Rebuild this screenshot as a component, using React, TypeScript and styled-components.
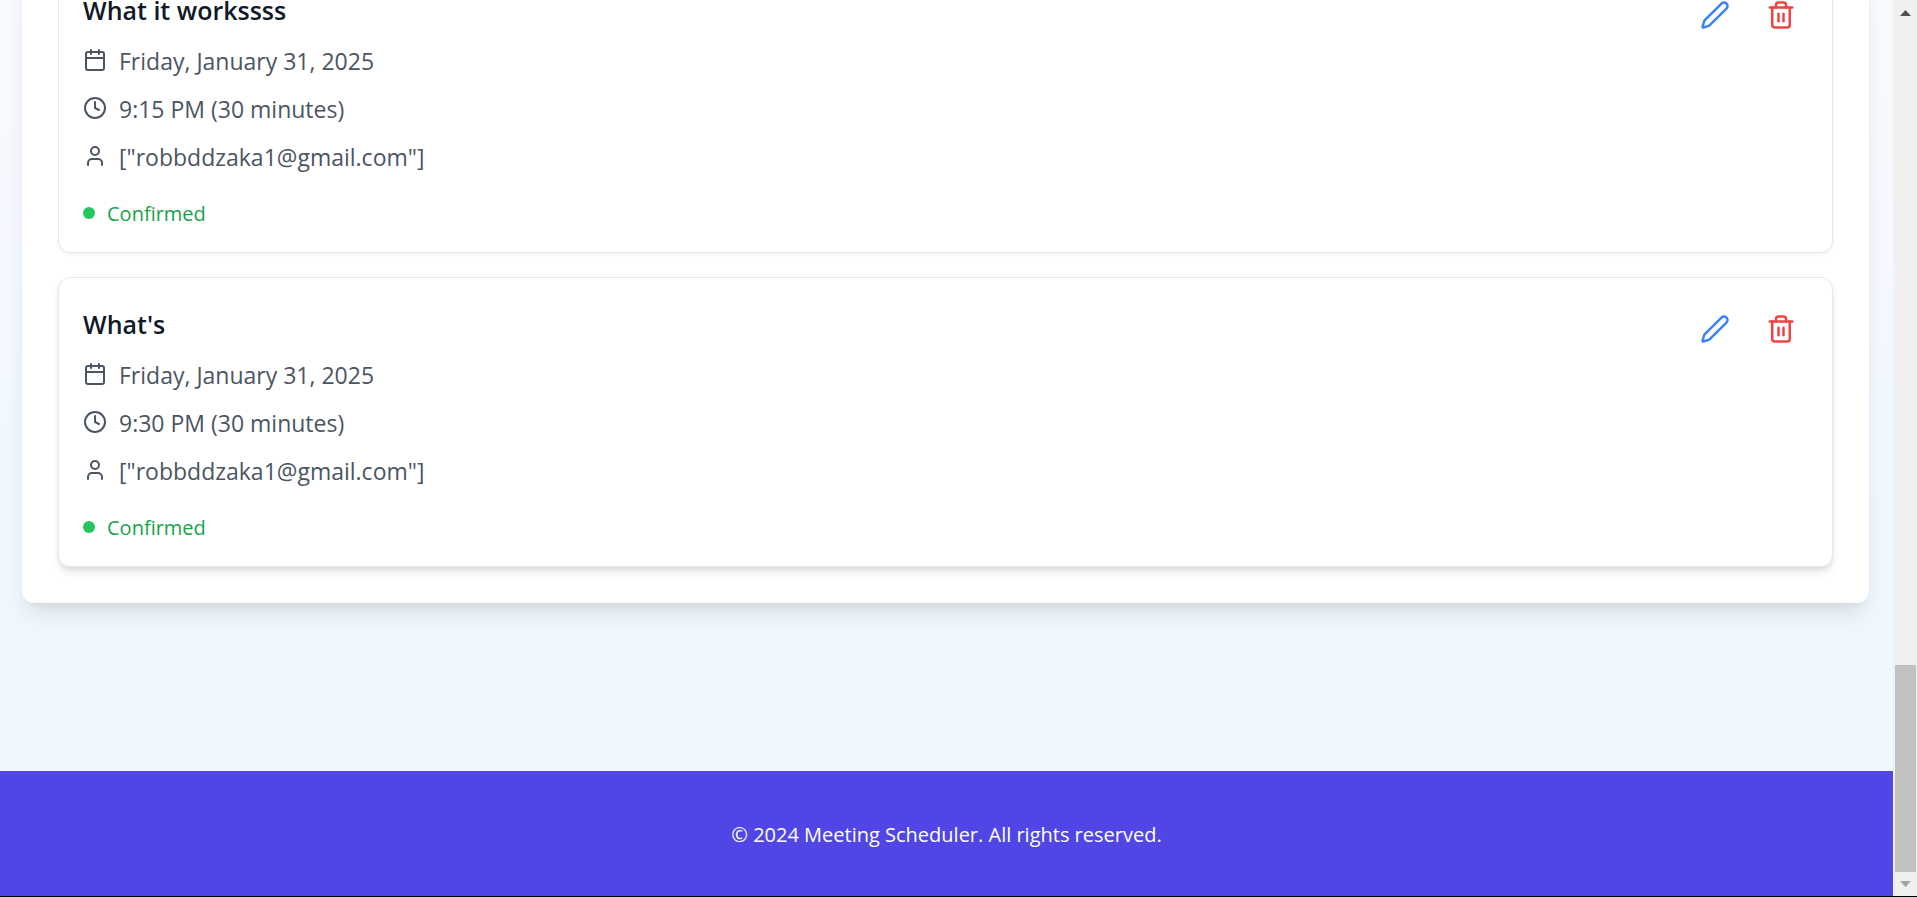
import React from "react";
import styled, { createGlobalStyle } from "styled-components";
import { Calendar, Clock, Pen, Trash2, User } from "lucide-react";

const GlobalStyle = createGlobalStyle`
  *, *::before, *::after { box-sizing: border-box; }
  body {
    margin: 0;
    font-family: "Open Sans", "Noto Sans", sans-serif;
    font-size: 23px;
    line-height: 34px;
    color: #111827;
  }
  h3, p, ul { margin: 0; padding: 0; }
`;

const Screen = styled.div`
  display: flex;
  height: 100vh;
  overflow: hidden;
  border-bottom: 1px solid #000;
`;

const Page = styled.div`
  flex: 1;
  min-width: 0;
  display: flex;
  flex-direction: column;
  justify-content: flex-end;
  background: linear-gradient(to bottom, #f8fbff, #f0f7ff 65%);
`;

const Main = styled.main`
  flex: none;
  padding: 72px 24px 168px 22px;
`;

const Panel = styled.section`
  padding: 36px;
  border-radius: 12px;
  background: #fff;
  box-shadow: 0 15px 23px -5px rgba(0, 0, 0, 0.1), 0 6px 9px -6px rgba(0, 0, 0, 0.1);
`;

const MeetingList = styled.ul`
  display: flex;
  flex-direction: column;
  gap: 24px;
  list-style: none;
`;

const MeetingCard = styled.li<{ $raised: boolean }>`
  display: flex;
  justify-content: space-between;
  align-items: flex-start;
  padding: 24px;
  border: 1px solid #e5e7eb;
  border-radius: 12px;
  background: #fff;
  box-shadow: ${(p) =>
    p.$raised
      ? "0 6px 9px -1px rgba(0, 0, 0, 0.1), 0 3px 6px -3px rgba(0, 0, 0, 0.1)"
      : "0 2px 3px rgba(0, 0, 0, 0.05)"};
`;

const Title = styled.h3`
  padding-top: 2px;
  margin-bottom: 12px;
  font-size: 25px;
  font-weight: 600;
  line-height: 40px;
`;

const Details = styled.div`
  display: flex;
  flex-direction: column;
  gap: 12px;
`;

const Detail = styled.p`
  display: flex;
  align-items: center;
  gap: 12px;
  color: #4b5563;
`;

const Label = styled.span`
  padding-top: 2px;
`;

const Status = styled.p`
  display: flex;
  align-items: center;
  gap: 12px;
  margin-top: 24px;
  font-size: 20px;
  line-height: 28px;
  color: #16a34a;
`;

const Dot = styled.span`
  width: 12px;
  height: 12px;
  border-radius: 50%;
  background: #22c55e;
`;

const Actions = styled.div`
  display: flex;
  gap: 12px;
`;

const IconButton = styled.button<{ $color: string }>`
  display: flex;
  padding: 12px;
  border: 0;
  background: none;
  color: ${(p) => p.$color};
  cursor: pointer;
`;

const Footer = styled.footer`
  flex: none;
  padding: 50px 24px 47px;
  background: #4f46e5;
  color: #fff;
  font-size: 20px;
  line-height: 28px;
  text-align: center;
`;

const Scrollbar = styled.div`
  flex: none;
  display: flex;
  flex-direction: column;
  justify-content: space-between;
  width: 24px;
  background: #f0f0f0;
`;

const ScrollArrow = styled.svg`
  display: block;
  width: 24px;
  height: 24px;
`;

const Track = styled.div`
  flex: 1;
  display: flex;
  flex-direction: column;
  justify-content: flex-end;
  padding: 0 1px 0 2px;
`;

const Thumb = styled.div`
  height: 24.4%;
  background: #c1c1c1;
`;

const meetings = [
  { title: "What it workssss", time: "9:15 PM (30 minutes)", raised: false },
  { title: "What's", time: "9:30 PM (30 minutes)", raised: true },
];

export default function App() {
  return (
    <>
      <GlobalStyle />
      <Screen>
        <Page>
          <Main>
            <Panel>
              <MeetingList>
                {meetings.map((m) => (
                  <MeetingCard key={m.title} $raised={m.raised}>
                    <div>
                      <Title>{m.title}</Title>
                      <Details>
                        <Detail>
                          <Calendar size={24} />
                          <Label>Friday, January 31, 2025</Label>
                        </Detail>
                        <Detail>
                          <Clock size={24} />
                          <Label>{m.time}</Label>
                        </Detail>
                        <Detail>
                          <User size={24} />
                          <Label>["robbddzaka1@gmail.com"]</Label>
                        </Detail>
                      </Details>
                      <Status>
                        <Dot />
                        <Label>Confirmed</Label>
                      </Status>
                    </div>
                    <Actions>
                      <IconButton type="button" aria-label="Edit meeting" $color="#3b82f6">
                        <Pen size={30} />
                      </IconButton>
                      <IconButton type="button" aria-label="Delete meeting" $color="#ef4444">
                        <Trash2 size={30} />
                      </IconButton>
                    </Actions>
                  </MeetingCard>
                ))}
              </MeetingList>
            </Panel>
          </Main>
          <Footer>© 2024 Meeting Scheduler. All rights reserved.</Footer>
        </Page>
        <Scrollbar aria-hidden="true">
          <ScrollArrow viewBox="0 0 24 24">
            <path d="M7 16h11l-5.500-6z" fill="#505050" />
          </ScrollArrow>
          <Track>
            <Thumb />
          </Track>
          <ScrollArrow viewBox="0 0 24 24">
            <path d="M7 9h11l-5.500 6z" fill="#a3a3a3" />
          </ScrollArrow>
        </Scrollbar>
      </Screen>
    </>
  );
}
